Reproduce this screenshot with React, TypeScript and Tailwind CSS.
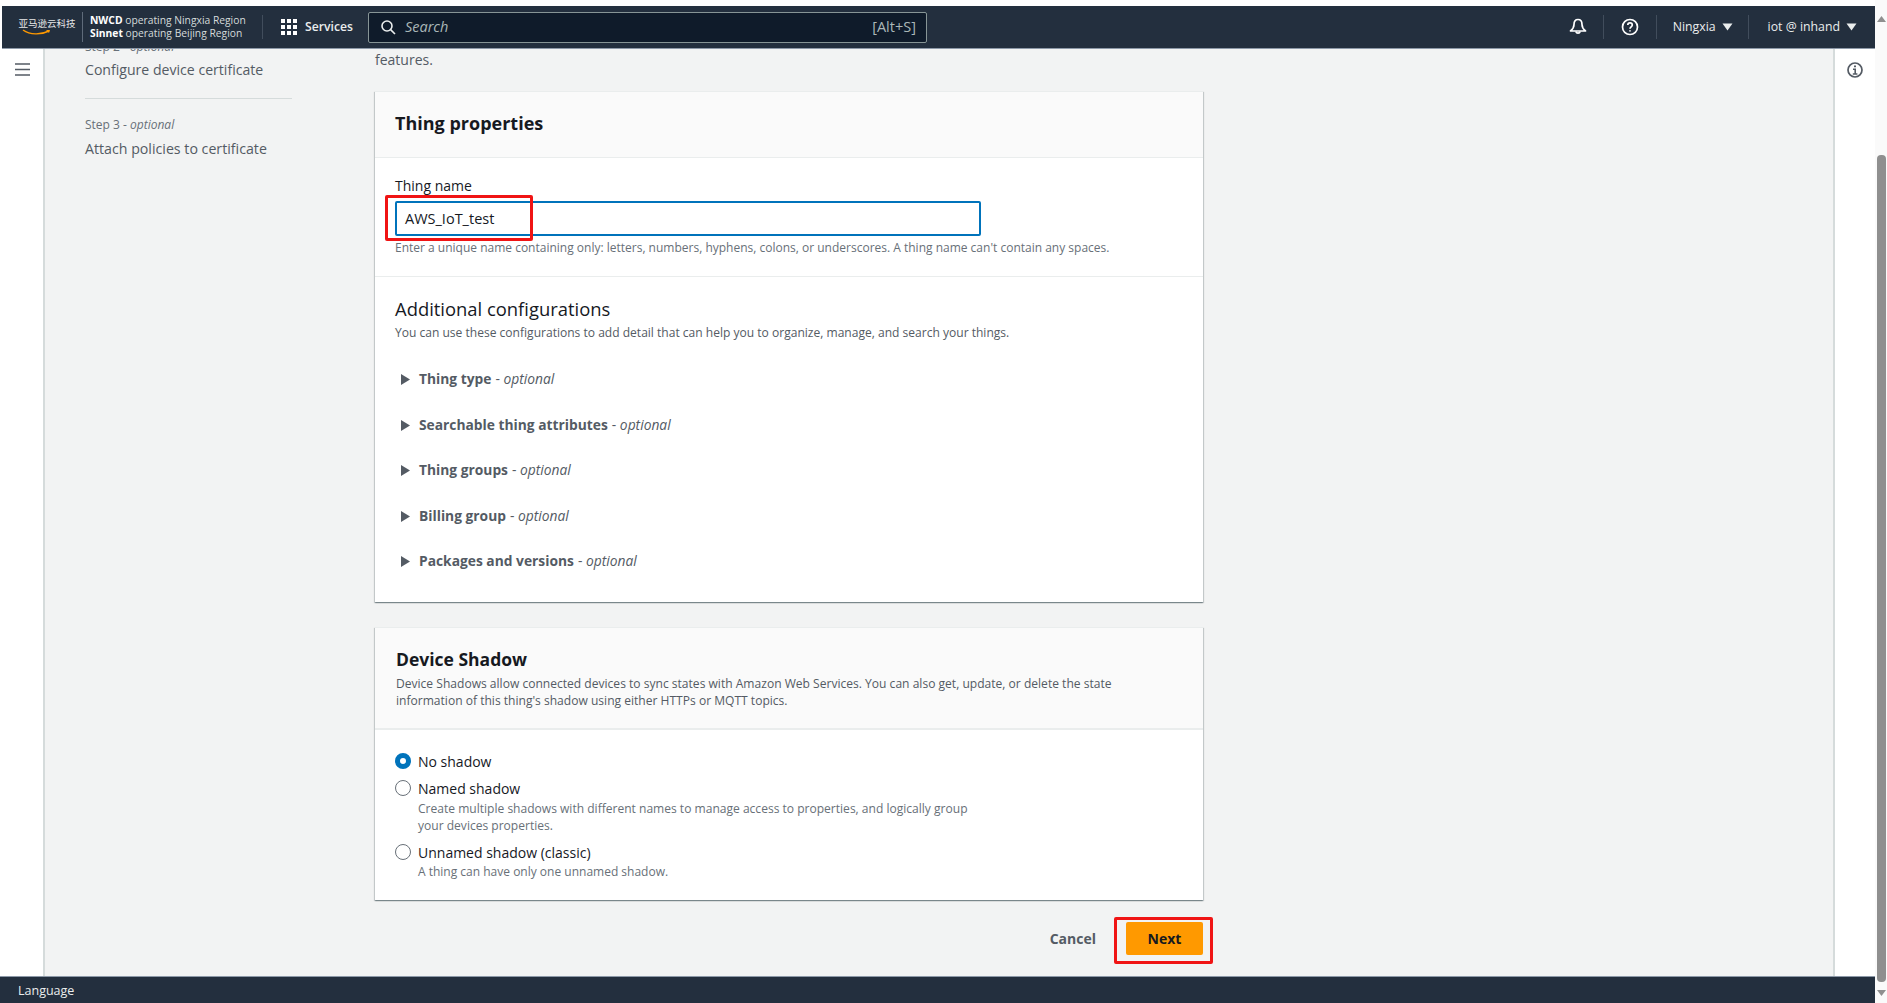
import React from "react";

const Caret = ({ className = "" }: { className?: string }) => (
  <svg width="11" height="8" viewBox="0 0 11 8" className={className}>
    <path d="M0.5 0.5h10L5.5 7.5z" fill="currentColor" />
  </svg>
);

const Expander = ({ title }: { title: string }) => (
  <div className="flex h-[45.5px] items-center text-[13.8px] text-[#545b64]">
    <svg width="9" height="11" viewBox="0 0 9 11" className="ml-[6px] mr-[9px]">
      <path d="M0 0l9 5.5L0 11z" fill="#545b64" />
    </svg>
    <span className="font-bold">{title}</span>
    <span className="ml-1">
      - <i>optional</i>
    </span>
  </div>
);

const Radio = ({ on = false }: { on?: boolean }) =>
  on ? (
    <span className="mr-[7px] h-[16px] w-[16px] shrink-0 rounded-full border-[5px] border-[#0073bb] bg-white" />
  ) : (
    <span className="mr-[7px] h-[16px] w-[16px] shrink-0 rounded-full border border-[#687078] bg-white" />
  );

const Vr = ({ h = "h-[24px]" }: { h?: string }) => <div className={`w-px bg-[#414d5c] ${h}`} />;

export default function App() {
  return (
    <div
      className="flex h-[1003px] w-full overflow-hidden bg-white"
      style={{ fontFamily: '"Open Sans","Noto Sans","Noto Sans CJK SC",sans-serif' }}
    >
      <div className="flex min-w-0 flex-1 flex-col">
        <div className="h-[6px] shrink-0 bg-white" />
        {/* header */}
        <header className="z-10 ml-[2px] flex h-[43px] shrink-0 items-center border-b border-[#8d99a8] bg-[#232f3e] text-white">
          <div className="ml-[16px] flex w-[58px] flex-col items-center">
            <span className="whitespace-nowrap text-[9.5px] leading-[11px] text-[#e8e8e8]">亚马逊云科技</span>
            <svg width="30" height="7" viewBox="0 0 30 7" className="-ml-[20px]">
              <path d="M1 1c7 5 18 5 26 1" fill="none" stroke="#ff9900" strokeWidth="1.4" />
              <path d="M24 1l4 0-1 3z" fill="#ff9900" />
            </svg>
          </div>
          <div className="ml-[6px] h-[30px] w-px bg-[#5f6b7a]" />
          <div className="ml-[7px] w-[172px] whitespace-nowrap text-[10.3px] leading-[13px] text-[#d5dbdb]">
            <div>
              <b className="text-white">NWCD</b> operating Ningxia Region
            </div>
            <div>
              <b className="text-white">Sinnet</b> operating Beijing Region
            </div>
          </div>
          <Vr />
          <div className="ml-[18px] grid grid-cols-3 gap-[2px]">
            {Array.from({ length: 9 }).map((_, i) => (
              <span key={i} className="h-[4px] w-[4px] bg-white" />
            ))}
          </div>
          <span className="ml-[8px] text-[12.2px] font-semibold text-[#eaeded]">Services</span>
          <div className="ml-[15px] flex h-[31px] w-[559px] items-center rounded-[2px] border border-[#879596] bg-[#0f1b2a] pl-[12px] pr-[10px]">
            <svg width="15" height="15" viewBox="0 0 15 15" fill="none" stroke="#eaeded" strokeWidth="1.6">
              <circle cx="6" cy="6" r="5" />
              <path d="M9.6 9.6L14 14" />
            </svg>
            <i className="ml-[9px] text-[14.5px] text-[#aab7b8]">Search</i>
            <span className="ml-auto text-[14.5px] text-[#aab7b8]">[Alt+S]</span>
          </div>
          <div className="flex-1" />
          <svg width="18" height="18" viewBox="0 0 18 18" fill="none" stroke="#fff" strokeWidth="1.7" className="mr-[16px]">
            <path d="M9 1.5c-3 0-4 2.5-4 5 0 3-1 4.5-3.5 6.5h15C14 11 13 9.500 13 6.500c0-2.500-1-5-4-5z" strokeLinejoin="round" />
            <path d="M6.800 13.500a2.300 2.300 0 0 0 4.400 0" />
          </svg>
          <Vr />
          <svg width="18" height="18" viewBox="0 0 18 18" fill="none" stroke="#fff" strokeWidth="1.700" className="mx-[17px]">
            <circle cx="9" cy="9" r="7.500" />
            <path d="M6.800 7c0-1.300 1-2.200 2.200-2.200S11.300 5.700 11.300 7c0 1.800-2.300 1.900-2.300 3.700" />
            <path d="M9 12.200v1.400" />
          </svg>
          <Vr />
          <span className="ml-[16px] text-[12.3px] text-[#eaeded]">Ningxia</span>
          <Caret className="ml-[6px] mr-[15px] text-[#eaeded]" />
          <Vr />
          <span className="ml-[19px] text-[12.3px] text-[#eaeded]">iot @ inhand</span>
          <Caret className="ml-[6px] mr-[18px] text-[#eaeded]" />
        </header>

        {/* body */}
        <div className="flex min-h-0 flex-1">
          <div className="flex w-[45px] shrink-0 justify-center border-r-2 border-[#d5dbdb] bg-white pt-[14px]">
            <svg width="15" height="13" viewBox="0 0 15 13" className="ml-[1px]">
              <path d="M0 1h15M0 6.500h15M0 12h15" stroke="#545b64" strokeWidth="1.700" />
            </svg>
          </div>

          <div className="flex min-w-0 flex-1 overflow-hidden bg-[#f2f3f3]">
            {/* steps */}
            <nav className="ml-[40px] mt-[-10px] w-[207px] shrink-0 text-[#687078]">
              <div className="text-[12px] leading-[16px]">
                Step 2 - <i>optional</i>
              </div>
              <div className="mt-[5px] text-[14.1px] leading-[20px] text-[#545b64]">Configure device certificate</div>
              <div className="mt-[18px] border-t border-[#d5dbdb]" />
              <div className="mt-[18px] text-[12px] leading-[16px]">
                Step 3 - <i>optional</i>
              </div>
              <div className="mt-[6px] text-[14.2px] leading-[20px] text-[#545b64]">Attach policies to certificate</div>
            </nav>

            {/* form */}
            <main className="ml-[83px] w-[828px] shrink-0 pt-[1px]">
              <p className="text-[14px] leading-[20px] text-[#545b64]">features.</p>

              <section className="mt-[21px] h-[511px] border-t border-[#eaeded] bg-white shadow-[0_1px_1px_0_rgba(0,28,36,0.3),1px_1px_1px_0_rgba(0,28,36,0.15),-1px_1px_1px_0_rgba(0,28,36,0.15)]">
                <div className="flex h-[66px] items-center border-b border-[#eaeded] bg-[#fafafa] px-[20px] pb-[2px]">
                  <h2 className="text-[18px] font-bold text-[#16191f]">Thing properties</h2>
                </div>
                <div className="h-[119px] border-b border-[#eaeded] px-[20px] pt-[19px]">
                  <div className="text-[14px] leading-[18px] text-[#16191f]">Thing name</div>
                  <div className="relative mt-[6px]">
                    <div className="flex h-[35px] w-[586px] items-center rounded-[2px] border-2 border-[#0073bb] bg-white pl-[8px] text-[14.500px] text-[#16191f]">
                      AWS_IoT_test
                    </div>
                    <div className="absolute left-[-10px] top-[-6px] h-[46px] w-[148px] rounded-[2px] border-[3px] border-[#f01414]" />
                  </div>
                  <div className="mt-[4px] whitespace-nowrap text-[12px] leading-[16px] text-[#687078]">
                    Enter a unique name containing only: letters, numbers, hyphens, colons, or underscores. A thing name can't contain any spaces.
                  </div>
                </div>
                <div className="px-[20px] pt-[20px]">
                  <h3 className="text-[18.4px] leading-[24px] text-[#16191f]">Additional configurations</h3>
                  <div className="mt-[4px] text-[12.050px] leading-[16px] text-[#545b64]">
                    You can use these configurations to add detail that can help you to organize, manage, and search your things.
                  </div>
                  <div className="mt-[16px]">
                    {[
                      "Thing type",
                      "Searchable thing attributes",
                      "Thing groups",
                      "Billing group",
                      "Packages and versions",
                    ].map((t) => (
                      <Expander key={t} title={t} />
                    ))}
                  </div>
                </div>
              </section>

              <section className="mt-[25px] h-[273px] border-t border-[#eaeded] bg-white shadow-[0_1px_1px_0_rgba(0,28,36,0.3),1px_1px_1px_0_rgba(0,28,36,0.15),-1px_1px_1px_0_rgba(0,28,36,0.15)]">
                <div className="h-[102px] border-b-2 border-[#eaeded] bg-[#fafafa] px-[21px] pt-[19px]">
                  <h2 className="text-[17.500px] font-bold leading-[24px] text-[#16191f]">Device Shadow</h2>
                  <p className="mt-[4px] w-[780px] text-[12.070px] leading-[17px] text-[#545b64]">
                    Device Shadows allow connected devices to sync states with Amazon Web Services. You can also get, update, or delete the state information of this thing's shadow using either HTTPs or MQTT topics.
                  </p>
                </div>
                <div className="px-[20px] pt-[21px] text-[14px] text-[#16191f]">
                  <div className="flex h-[20px] items-center">
                    <Radio on />
                    No shadow
                  </div>
                  <div className="mt-[7px] flex h-[20px] items-center">
                    <Radio />
                    Named shadow
                  </div>
                  <div className="ml-[23px] mt-[2px] w-[565px] text-[12.050px] leading-[17px] text-[#687078]">
                    Create multiple shadows with different names to manage access to properties, and logically group your devices properties.
                  </div>
                  <div className="mt-[8px] flex h-[20px] items-center">
                    <Radio />
                    Unnamed shadow (classic)
                  </div>
                  <div className="ml-[23px] mt-[1px] text-[12px] leading-[18px] text-[#687078]">A thing can have only one unnamed shadow.</div>
                </div>
              </section>

              <div className="mt-[22px] flex items-center justify-end">
                <span className="mr-[30px] text-[14px] font-bold text-[#545b64]">Cancel</span>
                <div className="relative">
                  <button className="flex h-[33px] w-[77px] items-center justify-center rounded-[2px] bg-[#ff9900] text-[14px] font-bold text-[#16191f]">
                    Next
                  </button>
                  <div className="absolute left-[-12px] top-[-5px] h-[47px] w-[99px] rounded-[2px] border-[3px] border-[#f01414]" />
                </div>
              </div>
            </main>
            <div className="flex-1" />
          </div>

          <div className="flex w-[42px] shrink-0 justify-center border-l-2 border-[#d5dbdb] bg-white pt-[13px]">
            <svg width="16" height="16" viewBox="0 0 16 16" fill="none" stroke="#545b64" strokeWidth="1.700">
              <circle cx="8" cy="8" r="7" />
              <path d="M6 7.200h2.200V12M5.800 12h4.600" strokeWidth="1.600" />
              <path d="M8 3.500v1.800" strokeWidth="2" />
            </svg>
          </div>
        </div>

        {/* footer */}
        <footer className="z-10 flex h-[27px] shrink-0 items-center border-t border-[#8d99a8] bg-[#232f3e] pl-[18px] pt-[2px] text-[12.5px] text-[#eaeded]">
          Language
        </footer>
      </div>

      {/* scrollbar */}
      <div className="flex w-[12px] shrink-0 flex-col items-center bg-[#fafafa]">
        <svg width="9" height="6" viewBox="0 0 9 6" className="mt-[16px]">
          <path d="M0 6h9L4.500 0z" fill="#8f8f8f" />
        </svg>
        <div className="mt-[133px] h-[827px] w-[9px] rounded-[4px] bg-[#8f8f8f]" />
        <svg width="9" height="6" viewBox="0 0 9 6" className="mt-[8px]">
          <path d="M0 0h9L4.500 6z" fill="#8f8f8f" />
        </svg>
      </div>
    </div>
  );
}
